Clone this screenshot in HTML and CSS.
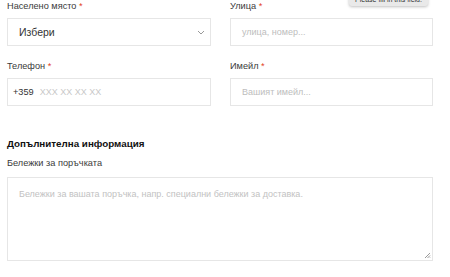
FILE: index.html
```html
<!DOCTYPE html>
<html lang="bg">
<head>
<meta charset="utf-8">
<link rel="stylesheet" href="styles.css">
</head>
<body>
<div class="page">
  <div class="grid">
    <div class="field">
      <label class="label">Населено място <span class="req">*</span></label>
      <div class="box select">
        <span class="val">Избери</span>
        <svg class="chev" width="8" height="5" viewBox="0 0 8 5"><path d="M1 1l3 3 3-3" fill="none" stroke="#999" stroke-width="1"/></svg>
      </div>
    </div>
    <div class="field">
      <label class="label">Улица <span class="req">*</span></label>
      <div class="box"><span class="ph">улица, номер...</span></div>
      <div class="tip">Please fill in this field.</div>
    </div>
    <div class="field">
      <label class="label">Телефон <span class="req">*</span></label>
      <div class="box phone"><span class="code">+359</span><span class="ph">XXX XX XX XX</span></div>
    </div>
    <div class="field">
      <label class="label">Имейл <span class="req">*</span></label>
      <div class="box"><span class="ph">Вашият имейл...</span></div>
    </div>
  </div>
  <h3 class="heading">Допълнителна информация</h3>
  <label class="label">Бележки за поръчката</label>
  <div class="area">
    <span class="ph">Бележки за вашата поръчка, напр. специални бележки за доставка.</span>
    <svg class="grip" width="7" height="7" viewBox="0 0 7 7"><path d="M6 1L1 6M6 3.5L3.5 6M6 5.5L5.5 6" stroke="#999" stroke-width="1"/></svg>
  </div>
</div>
</body>
</html>
```
FILE: styles.css
```css
* { box-sizing: border-box; }
html, body { margin: 0; padding: 0; background: #fff; }
body { font-family: "Liberation Sans", Arial, sans-serif; color: #333; overflow: hidden; }
.page { padding: 0 17px 0 7px; width: 450px; }
.grid { display: grid; grid-template-columns: 204px 203px; column-gap: 19px; row-gap: 14px; }
.field { position: relative; display: flex; flex-direction: column; }
.label { display: block; font-size: 9.2px; line-height: 13px; color: #3a3a3a; height: 13px; }
.req { color: #e2401c; }
.box { margin-top: 5px; height: 28px; border: 1px solid #e6e6e6; display: flex; align-items: center; padding: 0 11px; font-size: 9px; }
.select { justify-content: space-between; padding: 0 5px 0 11px; }
.select .val { font-size: 10.5px; color: #333; }
.chev { margin-top: 1px; }
.ph { color: #bdbdbd; font-size: 9px; }
.phone { padding-left: 5px; }
.phone .code { color: #333; font-size: 9.2px; margin-right: 6px; }
.phone .ph { color: #c8c8c8; }
.tip { position: absolute; top: -6px; left: 119px; width: 79px; text-align: center; background: #e9e9e9; color: #333; font-size: 7px; line-height: 12px; padding: 0 3px; border-radius: 3px; box-shadow: 0 1px 3px rgba(0,0,0,0.25); white-space: nowrap; overflow: hidden; }
.heading { margin: 31px 0 6px; font-size: 9.8px; line-height: 14px; font-weight: bold; color: #111; }
.area { position: relative; margin-top: 7px; width: 426px; height: 84px; border: 1px solid #e6e6e6; padding: 10px 11px; font-size: 9px; line-height: 13px; }
.area .ph { color: #c2c2c2; }
.grip { position: absolute; right: 1px; bottom: 1px; }
```
